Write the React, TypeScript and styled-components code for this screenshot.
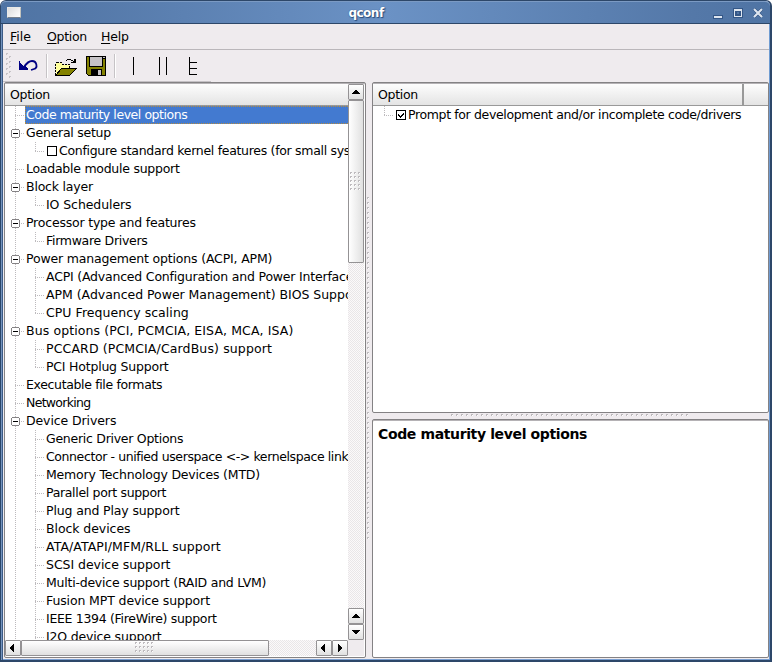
import React from 'react';
import styled, { createGlobalStyle, css } from 'styled-components';

const Global = createGlobalStyle`
  * { box-sizing: border-box; }
  html, body { margin: 0; padding: 0; background: #fff; overflow: hidden; }
  body { font-family: "DejaVu Sans", sans-serif; font-size: 12.5px; color: #000; }
`;

const Window = styled.div`
  width: 772px;
  height: 662px;
  display: flex;
  flex-direction: column;
  background: #efebee;
  border: 1px solid #2d4769;
  border-bottom-width: 2px;
  border-right-width: 2px;
  border-radius: 6px 6px 0 0;
  box-shadow: inset 1px 0 #7393be, inset 2px 0 #3c5b86, inset -1px 0 #6f9bd2, inset 0 -1px #7a9fd1;
`;

const TitleBar = styled.header`
  height: 23px;
  flex: none;
  display: flex;
  align-items: center;
  padding: 0 7px 0 6px;
  border-top: 1px solid #7b9ac3;
  border-bottom: 1px solid #2d4769;
  border-radius: 5px 5px 0 0;
  background: linear-gradient(90deg, #4f74a4 0%, #5478a8 10%, #6b92c5 50%, #5478a8 90%, #4f74a4 100%);
`;

const WindowIcon = styled.span`
  width: 14px;
  height: 11px;
  background: linear-gradient(135deg, #ddd, #fff);
  border: 1px solid #e9e9e6;
  border-right-color: #c4c4be;
  border-bottom-color: #77818d;
`;

const Title = styled.h1`
  flex: 1;
  margin: 0 0 0 -2px;
  text-align: center;
  color: #fff;
  font: bold 12px/20px "DejaVu Sans", sans-serif;
  letter-spacing: -0.5px;
  text-shadow: 1px 1px 1px #294b79, 0 0 1px #294b79;
`;

const WindowButtons = styled.svg`
  width: 50px;
  height: 14px;
  flex: none;
`;

const MenuBar = styled.nav`
  height: 26px;
  flex: none;
  display: flex;
  gap: 15px;
  padding: 0 7px;
  margin: 0 1px 0 2px;
  border-bottom: 1px solid #bab6ba;
  line-height: 26px;
`;

const MenuItem = styled.span<{ $w: number; $s?: number }>`
  width: ${p => p.$w}px;
  white-space: nowrap;
  letter-spacing: ${p => p.$s ?? 0}px;
  u { text-decoration-thickness: 1px; text-underline-offset: 2px; }
`;

const ToolBar = styled.div`
  width: 208px;
  height: 32px;
  flex: none;
  margin-left: 2px;
  border-bottom: 1px solid #c5c1c5;
  svg { display: block; }
`;

const Body = styled.main`
  flex: 1;
  min-height: 0;
  display: flex;
  padding: 0 1px 2px 3px;
`;

const Frame = styled.section<{ $h?: number; $scroll?: boolean }>`
  height: ${p => (p.$h ? `${p.$h}px` : 'auto')};
  flex: ${p => (p.$h ? 'none' : '1')};
  min-height: 0;
  display: flex;
  background: #fff;
  overflow: hidden;
  border: 1px solid #848284;
  border-radius: 2px;
  box-shadow: inset 0 1px #b5b2b5;
  padding: ${p => (p.$scroll ? '1px 1px 1px 0' : '1px 0 0')};
`;

const LeftPane = styled.div`
  width: 362px;
  flex: none;
  display: flex;
`;

const RightPane = styled.div`
  flex: 1;
  min-width: 0;
  display: flex;
  flex-direction: column;
`;

const Column = styled.div`
  flex: 1;
  min-width: 0;
  display: flex;
  flex-direction: column;
`;

const Header = styled.div`
  height: 22px;
  flex: none;
  display: flex;
  border-bottom: 1px solid #999;
  background: linear-gradient(#fdfdfd, #e4e4e4);
  line-height: 21px;
`;

const HeaderCell = styled.div<{ $w?: number }>`
  ${p => (p.$w ? css`flex: none; width: ${p.$w}px; border-right: 2px solid #999;` : css`flex: 1;`)}
  padding-left: 5px;
  letter-spacing: -0.3px;
`;

const Tree = styled.div`
  flex: 1;
  min-height: 0;
  overflow: hidden;
`;

const Row = styled.div`
  height: 18px;
  display: flex;
  white-space: nowrap;
`;

const Branches = styled.svg`
  height: 18px;
  flex: none;
  display: block;
`;

const Label = styled.span<{ $selected?: boolean; $s?: number }>`
  flex: 1 0 auto;
  line-height: 17px;
  padding-left: 1px;
  letter-spacing: ${p => p.$s ?? 0}px;
  ${p => p.$selected && css`
    color: #fff;
    background:
      repeating-linear-gradient(90deg, #b58d42 0 1px, #437ad0 1px 2px) 0 0 / 100% 1px no-repeat,
      repeating-linear-gradient(90deg, #b58d42 0 1px, #437ad0 1px 2px) 0 100% / 100% 1px no-repeat,
      repeating-linear-gradient(#b58d42 0 1px, #437ad0 1px 2px) 0 0 / 1px 100% no-repeat,
      #437ad0;
  `}
`;

const VScroll = styled.div`
  width: 16px;
  flex: none;
  display: flex;
  flex-direction: column;
`;

const HScroll = styled.div`
  height: 16px;
  flex: none;
  display: flex;
`;

const Trough = styled.div`
  flex: 1;
  background: repeating-conic-gradient(#e9e6e8 0 25%, #fbf9fa 0 50%) 0 0 / 2px 2px;
`;

const Thumb = styled.div<{ $len: number; $vertical?: boolean }>`
  flex: none;
  display: flex;
  align-items: center;
  justify-content: center;
  width: ${p => (p.$vertical ? 16 : p.$len)}px;
  height: ${p => (p.$vertical ? p.$len : 16)}px;
  border: 1px solid #949294;
  border-radius: 1px;
  background: linear-gradient(${p => (p.$vertical ? '90deg' : '180deg')}, #fff, #e0e0e0);
`;

const Arrow = styled.svg`
  flex: none;
  width: 16px;
  height: 16px;
`;

const Corner = styled.div`
  height: 16px;
  flex: none;
  background: #efebee;
`;

const VSplit = styled.div`
  width: 6px;
  flex: none;
  display: flex;
  align-items: center;
  padding: 0 0 1px 1px;
`;

const HSplit = styled.div`
  height: 6px;
  flex: none;
  display: flex;
  align-items: flex-end;
  justify-content: center;
`;

const Help = styled.h2`
  margin: 4px 0 0 5px;
  font: bold 14px/18px "DejaVu Sans", sans-serif;
  letter-spacing: -0.37px;
  white-space: nowrap;
`;

/* Grid of embossed grip dots. */
function Grip({ cols, rows, dx, dy }: { cols: number; rows: number; dx: number; dy: number }) {
  let dark = '';
  let light = '';
  for (let r = 0; r < rows; r++) {
    for (let c = 0; c < cols; c++) {
      const x = c * dx;
      const y = r * dy;
      dark += `M${x} ${y}h2v1h-1v1h-1z`;
      light += `M${x + 1} ${y + 1}h1v1h-1z`;
    }
  }
  return (
    <svg width={cols * dx} height={rows * dy} shapeRendering="crispEdges">
      <path d={dark} fill="#bdbabd" />
      <path d={light} fill="#fff" />
    </svg>
  );
}

const arrows = {
  up: 'M4 10h8v-1h-1v-1h-1v-1h-1v-1h-2v1h-1v1h-1v1h-1z',
  down: 'M4 6h8v1h-1v1h-1v1h-1v1h-2v-1h-1v-1h-1v-1h-1z',
  left: 'M9 4v8h-1v-1h-1v-1h-1v-1h-1v-2h1v-1h1v-1h1v-1z',
  right: 'M6 4v8h1v-1h1v-1h1v-1h1v-2h-1v-1h-1v-1h-1v-1z',
};

function ArrowButton({ dir }: { dir: keyof typeof arrows }) {
  return (
    <Thumb $len={16}>
      <Arrow viewBox="0 0 16 16" shapeRendering="crispEdges">
        <path d={arrows[dir]} />
      </Arrow>
    </Thumb>
  );
}

/* t: text, d: depth, s: letter spacing */
type Item = { t: string; d?: 1; open?: boolean; check?: boolean; last?: boolean; s?: number };

const items: Item[] = [
  { t: 'Code maturity level options', s: -0.44 },
  { t: 'General setup', open: true, s: -0.25 },
  { t: 'Configure standard kernel features (for small systems)', d: 1, check: true, last: true, s: -0.3 },
  { t: 'Loadable module support', s: -0.26 },
  { t: 'Block layer', open: true, s: -0.2 },
  { t: 'IO Schedulers', d: 1, last: true, s: -0.08 },
  { t: 'Processor type and features', open: true, s: -0.2 },
  { t: 'Firmware Drivers', d: 1, last: true, s: -0.3 },
  { t: 'Power management options (ACPI, APM)', open: true, s: -0.17 },
  { t: 'ACPI (Advanced Configuration and Power Interface) Support', d: 1, s: -0.2 },
  { t: 'APM (Advanced Power Management) BIOS Support', d: 1, s: -0.03 },
  { t: 'CPU Frequency scaling', d: 1, last: true, s: 0.05 },
  { t: 'Bus options (PCI, PCMCIA, EISA, MCA, ISA)', open: true, s: 0.1 },
  { t: 'PCCARD (PCMCIA/CardBus) support', d: 1, s: 0.13 },
  { t: 'PCI Hotplug Support', d: 1, last: true, s: -0.21 },
  { t: 'Executable file formats', s: -0.35 },
  { t: 'Networking', s: -0.7 },
  { t: 'Device Drivers', open: true, s: -0.1 },
  { t: 'Generic Driver Options', d: 1, s: -0.27 },
  { t: 'Connector - unified userspace <-> kernelspace linker', d: 1, s: -0.4 },
  { t: 'Memory Technology Devices (MTD)', d: 1, s: -0.19 },
  { t: 'Parallel port support', d: 1, s: -0.33 },
  { t: 'Plug and Play support', d: 1, s: -0.14 },
  { t: 'Block devices', d: 1, s: -0.07 },
  { t: 'ATA/ATAPI/MFM/RLL support', d: 1, s: 0.08 },
  { t: 'SCSI device support', d: 1, s: -0.05 },
  { t: 'Multi-device support (RAID and LVM)', d: 1, s: -0.23 },
  { t: 'Fusion MPT device support', d: 1, s: -0.12 },
  { t: 'IEEE 1394 (FireWire) support', d: 1, s: -0.31 },
  { t: 'I2O device support', d: 1, s: -0.17 },
];

function TreeRow({ item, index }: { item: Item; index: number }) {
  const w = item.d ? (item.check ? 53 : 40) : 20;
  return (
    <Row>
      <Branches width={w} viewBox={`0 0 ${w} 18`} shapeRendering="crispEdges">
        <g stroke="#bdbabd" strokeDasharray="1 1" fill="none">
          <path d="M10.5 0V18" />
          {item.d ? (
            <>
              <path d={`M30.5 0V${item.last ? 9 : 18}`} />
              <path d="M30 9.5H40" />
            </>
          ) : (
            <path d="M10 9.5H20" />
          )}
        </g>
        {item.open && (
          <>
            <path d="M7 5h7l1 1v7l-1 1h-7l-1-1v-7z" fill="#fff" />
            <path d="M7 5h7v1h1v7h-1v1h-7v-1h-1v-7h1zM7 6v7h7v-7z" fill="#848284" fillRule="evenodd" />
            <path d="M8 9h5v1h-5z" />
          </>
        )}
        {item.check && <path d="M42.5 4.5h9v9h-9z" fill="#fff" stroke="#000" />}
      </Branches>
      <Label $selected={index === 0} $s={item.s}>{item.t}</Label>
    </Row>
  );
}

function ToolIcons() {
  return (
    <svg width="208" height="31" viewBox="3 50 208 31" shapeRendering="crispEdges">
      <g fill="#c6c3c6">
        {[53, 58, 63, 68, 73].map(y => (
          <path key={y} d={`M6 ${y}h2v1h-1v1h-1zM9 ${y + 3}h2v1h-1v1h-1z`} />
        ))}
        <path d="M46 54h1v24h-1zM114 54h1v24h-1z" />
      </g>
      <g fill="#fff"><path d="M47 54h1v24h-1zM115 54h1v24h-1z" /></g>
      <path d="M19 61v9h9v-1l-3-3h-2l-3-4z" fill="#000084" />
      <path d="M24 67c2-3 4-6 8-6c5 0 6 7 2 8l-3 1" fill="none" stroke="#000084" strokeWidth="1.8" shapeRendering="auto" />
      <path d="M55.500 74.500V64.500l1.500-2h4l1.500 2h7v4" fill="#ffff9c" stroke="#000" strokeDasharray="2 1" />
      <path d="M55.500 75.500l6-7h15l-7 7z" fill="#848200" stroke="#000" />
      <path d="M66 60h1v-1h4v1h2v1h1v-2h2v4h-5v-1h2v-1h-2v-1h-4v1h-1z" />
      <path d="M86 56h20v20h-18l-2-2z" />
      <path d="M87 57h2v17h-2zM103 59h2v16h-2zM89 67h14v2h-14zM87 69h4v6h-3l-1-1zM102 69h3v6h-3z" fill="#848200" />
      <path d="M90 57h12v9h-12zM103 57h2v1h-2zM98 70h3v5h-3z" fill="#c6c3c6" />
      <path d="M133 57h1v18h-1zM159 57h1v18h-1zM166 57h1v18h-1z" />
      <path d="M189 57h1v18h-1zM190 62h7v1h-7zM190 68h7v1h-7zM190 74h7v1h-7z" />
    </svg>
  );
}

export default function App() {
  return (
    <>
      <Global />
      <Window>
        <TitleBar>
          <WindowIcon />
          <Title>qconf</Title>
          <WindowButtons viewBox="0 0 50 14" shapeRendering="crispEdges">
            <g fill="none" stroke="#345787" strokeWidth="4">
              <path d="M0 11H10M22 4h6v6h-6z" />
            </g>
            <path d="M1 10h8v2h-8z" fill="#dde5ef" />
            <path d="M21 3h8v8h-8zM22 5v5h6v-5z" fill="#dde5ef" fillRule="evenodd" />
            <path d="M41 3l8 8M49 3l-8 8" stroke="#345787" strokeWidth="4" />
            <path d="M41 3l8 8M49 3l-8 8" stroke="#dde5ef" strokeWidth="2.2" shapeRendering="auto" />
          </WindowButtons>
        </TitleBar>
        <MenuBar>
          <MenuItem $w={22}><u>F</u>ile</MenuItem>
          <MenuItem $w={39} $s={-0.3}><u>O</u>ption</MenuItem>
          <MenuItem $w={29} $s={-0.2}><u>H</u>elp</MenuItem>
        </MenuBar>
        <ToolBar><ToolIcons /></ToolBar>
        <Body>
          <LeftPane>
            <Frame $scroll>
              <Column>
                <Header><HeaderCell>Option</HeaderCell></Header>
                <Tree>{items.map((item, i) => <TreeRow key={item.t} item={item} index={i} />)}</Tree>
                <HScroll>
                  <ArrowButton dir="left" />
                  <Thumb $len={248}><Grip cols={5} rows={3} dx={4} dy={4} /></Thumb>
                  <Trough />
                  <ArrowButton dir="left" />
                  <ArrowButton dir="right" />
                </HScroll>
              </Column>
              <VScroll>
                <ArrowButton dir="up" />
                <Thumb $len={163} $vertical><Grip cols={3} rows={5} dx={4} dy={4} /></Thumb>
                <Trough />
                <ArrowButton dir="up" />
                <ArrowButton dir="down" />
                <Corner />
              </VScroll>
            </Frame>
          </LeftPane>
          <VSplit><Grip cols={1} rows={69} dx={5} dy={5} /></VSplit>
          <RightPane>
            <Frame $h={331}>
              <Column>
                <Header>
                  <HeaderCell $w={371}>Option</HeaderCell>
                  <HeaderCell />
                </Header>
                <Row>
                  <Branches width="34" viewBox="0 0 34 18" shapeRendering="crispEdges">
                    <path d="M11.500 0V9M11 9.500H21" stroke="#bdbabd" strokeDasharray="1 1" />
                    <path d="M23.500 4.500h9v9h-9z" fill="#fff" stroke="#000" />
                    <path d="M25 8v2l2 2 4-4v-2l-4 4z" />
                  </Branches>
                  <Label $s={-0.36}>Prompt for development and/or incomplete code/drivers</Label>
                </Row>
              </Column>
            </Frame>
            <HSplit><Grip cols={48} rows={1} dx={5} dy={5} /></HSplit>
            <Frame><Help>Code maturity level options</Help></Frame>
          </RightPane>
        </Body>
      </Window>
    </>
  );
}
